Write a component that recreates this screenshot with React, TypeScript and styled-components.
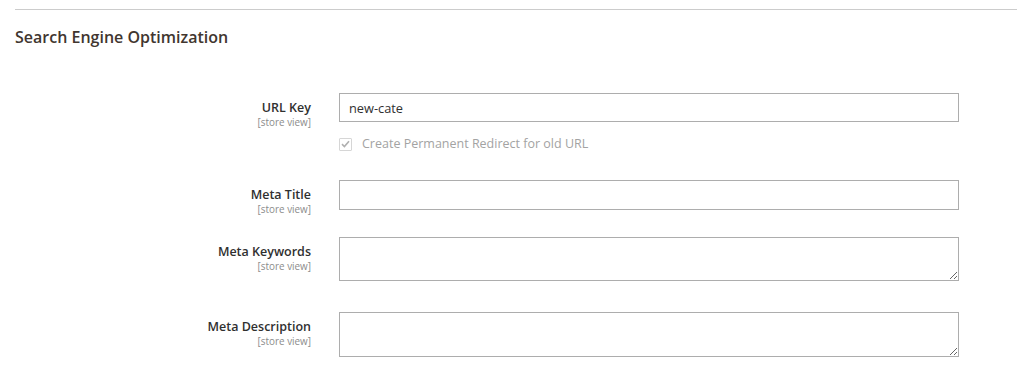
import React from "react";
import styled, { createGlobalStyle } from "styled-components";

const Global = createGlobalStyle`
  html, body { margin: 0; padding: 0; background: #fff; }
  body { font-family: "Open Sans", "Noto Sans", sans-serif; color: #303030; }
  * { box-sizing: border-box; }
`;

const Page = styled.div`
  margin-left: 15px;
  padding-top: 9px;
`;

const Divider = styled.div`
  border-top: 1px solid #cccccc;
`;

const Heading = styled.h2`
  margin: 16px 0 0 0;
  font-size: 16px;
  line-height: 22px;
  font-weight: 600;
  color: #41362f;
`;

const Form = styled.div`
  display: flex;
  flex-direction: column;
  margin-top: 45px;
`;

const Row = styled.div<{ $mb: number }>`
  display: flex;
  align-items: flex-start;
  gap: 28px;
  margin-bottom: ${(p) => p.$mb}px;
`;

const LabelCol = styled.div`
  width: 296px;
  flex: none;
  height: 34px;
  text-align: right;
  padding-top: 6px;
  display: flex;
  flex-direction: column;
  align-items: flex-end;
`;

const LabelText = styled.label`
  font-size: 12.5px;
  line-height: 18px;
  font-weight: 600;
  color: #303030;
`;

const Scope = styled.span`
  font-size: 9.9px;
  line-height: 10px;
  color: #8c8c8c;
`;

const Control = styled.div`
  width: 620px;
  flex: none;
`;

const TextInput = styled.input<{ $h: number }>`
  display: block;
  width: 100%;
  height: ${(p) => p.$h}px;
  border: 1px solid #adadad;
  border-radius: 0;
  padding: 0 9px;
  font-family: "Open Sans", sans-serif;
  font-size: 12.8px;
  color: #303030;
  outline: none;
  background: #fff;
`;

const TextArea = styled.textarea<{ $h: number }>`
  display: block;
  width: 100%;
  height: ${(p) => p.$h}px;
  border: 1px solid #adadad;
  border-radius: 0;
  padding: 6px 9px;
  font-family: "Open Sans", sans-serif;
  font-size: 13px;
  color: #303030;
  outline: none;
  resize: vertical;
  background: #fff;
`;

const CheckRow = styled.div`
  display: flex;
  align-items: center;
  gap: 10px;
  margin-left: 324px;
  margin-bottom: 27px;
`;

const CheckBox = styled.span`
  width: 13px;
  height: 13px;
  border: 1px solid #d6d6d6;
  border-radius: 1px;
  display: flex;
  align-items: center;
  justify-content: center;
  background: #fff;
`;

const CheckLabel = styled.span`
  font-size: 12.5px;
  line-height: 18px;
  color: #a3a3a3;
`;

function Field(props: { label: string; children: React.ReactNode; mb: number }) {
  return (
    <Row $mb={props.mb}>
      <LabelCol>
        <LabelText>{props.label}</LabelText>
        <Scope>[store view]</Scope>
      </LabelCol>
      <Control>{props.children}</Control>
    </Row>
  );
}

export default function App() {
  return (
    <>
      <Global />
      <Page>
        <Divider />
        <Heading>Search Engine Optimization</Heading>
        <Form>
          <Field label="URL Key" mb={8}>
            <TextInput $h={29} defaultValue="new-cate" />
          </Field>
          <CheckRow>
            <CheckBox>
              <svg width="9" height="8" viewBox="0 0 9 8">
                <path d="M1 4.2 L3.4 6.5 L8 1.2" fill="none" stroke="#b0b0b0" strokeWidth="1.6" />
              </svg>
            </CheckBox>
            <CheckLabel>Create Permanent Redirect for old URL</CheckLabel>
          </CheckRow>
          <Field label="Meta Title" mb={23}>
            <TextInput $h={30} />
          </Field>
          <Field label="Meta Keywords" mb={31}>
            <TextArea $h={44} />
          </Field>
          <Field label="Meta Description" mb={0}>
            <TextArea $h={45} />
          </Field>
        </Form>
      </Page>
    </>
  );
}
